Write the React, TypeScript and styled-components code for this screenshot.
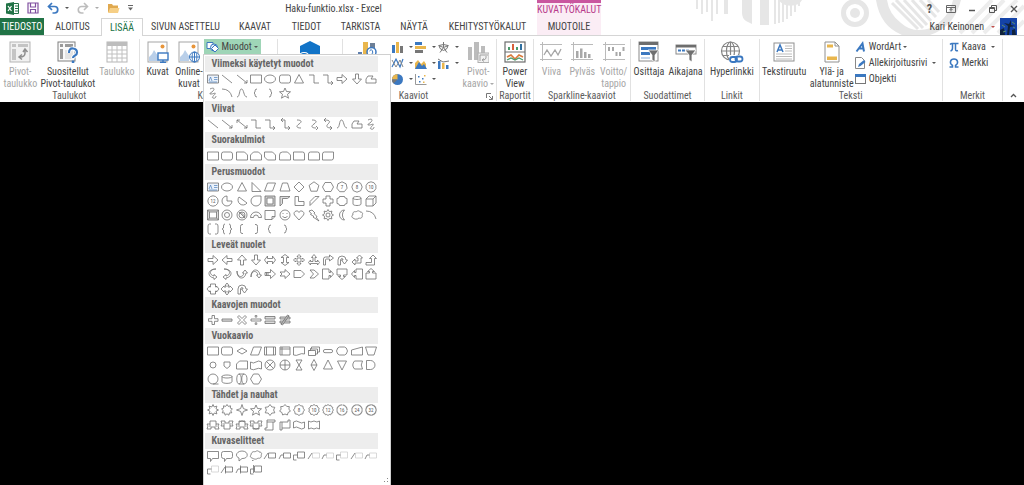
import React from 'react';
import styled, { createGlobalStyle, css } from 'styled-components';

const font = '"Roboto Condensed", Roboto, "Open Sans", sans-serif';
const green = '#217346';
const blue = '#3b78c0';
const amber = '#e9b64d';

const GlobalStyle = createGlobalStyle`
  * { box-sizing: border-box; }
  body { margin: 0; background: #000; font-family: ${font}; font-size: 10px; line-height: 12px; color: #444; }
  button { font: inherit; color: inherit; background: none; border: 0; padding: 0; margin: 0; }
  h1, h2, h3 { font-size: inherit; font-weight: inherit; margin: 0; }
  svg { display: block; flex: none; }
`;

/* ---------- window frame ---------- */
const Window = styled.div`
  min-height: 100vh;
  background: #000;
`;
const Top = styled.header`
  position: relative;
  background: #fff;
  border-bottom: 1px solid #d5d5d5;
`;
const Decoration = styled.svg`
  position: absolute;
  right: 0;
  top: 0;
`;
const TitleRow = styled.div`
  position: relative;
  display: flex;
  height: 18px;
`;
const QuickAccess = styled.div`
  width: 130px;
  display: flex;
  align-items: center;
  padding: 0 0 2px 6px;
  gap: 8px;
`;
const QuickButton = styled.button`
  display: flex;
  align-items: center;
  gap: 4px;
`;
const Title = styled.h1`
  width: 407px;
  text-align: center;
  line-height: 18px;
`;
const ContextHeading = styled.div`
  width: 64px;
  border-top: 3px solid #c9579f;
  background: #fbedf5;
  color: #b83b8b;
  text-align: center;
  line-height: 14px;
  white-space: nowrap;
`;
const WindowControls = styled.div`
  flex: 1;
  display: flex;
  justify-content: flex-end;
`;
const ControlButton = styled.button`
  width: 21px;
  display: flex;
  align-items: center;
  justify-content: center;
  font-size: 12px;
  font-weight: 700;
  color: #555;
`;

/* ---------- tabs ---------- */
const TabRow = styled.nav`
  position: relative;
  display: flex;
  height: 17px;
`;
const Tab = styled.button<{ $w: number; $kind?: 'file' | 'active' | 'context' }>`
  width: ${p => p.$w}px;
  height: 17px;
  white-space: nowrap;
  line-height: 17px;
  ${p => p.$kind === 'file' && css`background: ${green}; color: #fff;`}
  ${p => p.$kind === 'active' && css`
    height: 18px;
    background: #fff;
    color: ${green};
    border: 1px solid #d5d5d5;
    border-bottom: 0;
    line-height: 16px;
  `}
  ${p => p.$kind === 'context' && css`background: #fbedf5;`}
`;
const Account = styled.button`
  margin-left: auto;
  padding-right: 7px;
  display: flex;
  align-items: center;
  gap: 5px;
`;

/* ---------- ribbon ---------- */
const Ribbon = styled.main`
  display: flex;
  height: 66px;
  padding: 3px 0 0;
  background: #fff;
`;
const Group = styled.section<{ $w: number }>`
  flex: ${p => p.$w} 1 0;
  min-width: 0;
  height: 62px;
  display: flex;
  flex-direction: column;
  border-right: 1px solid #e1e1e1;
`;
const GroupBody = styled.div<{ $pad?: number }>`
  flex: 1;
  display: flex;
  padding-left: ${p => p.$pad ?? 0}px;
`;
const GroupLabel = styled.h2<{ $launcher?: boolean }>`
  position: relative;
  text-align: center;
  white-space: nowrap;
  line-height: 10px;
  color: #5c5c5c;
  padding-right: ${p => (p.$launcher ? 12 : 0)}px;
`;
const Launcher = styled.button`
  position: absolute;
  right: 3px;
  top: 2px;
`;
const BigButton = styled.button<{ $w: number }>`
  flex: ${p => p.$w} 1 0;
  min-width: 0;
  display: flex;
  flex-direction: column;
  align-items: center;
  justify-content: flex-start;
  gap: 3px;
  padding-top: 2px;
  white-space: nowrap;
  &:disabled { color: #a6a6a6; }
`;
const Caret = styled.span<{ $color?: string }>`
  display: inline-block;
  vertical-align: middle;
  margin-left: 2px;
  border: 2px solid transparent;
  border-top-color: ${p => p.$color ?? '#555'};
  border-bottom: 0;
`;
const Column = styled.div<{ $w: number }>`
  flex: ${p => p.$w} 1 0;
  min-width: 0;
  display: flex;
  flex-direction: column;
`;
const SmallButton = styled.button`
  height: 16px;
  display: flex;
  align-items: center;
  gap: 3px;
  white-space: nowrap;
`;
const ChartGrid = styled.div`
  flex: 70 1 0;
  display: grid;
  grid-template-columns: repeat(3, 1fr);
  align-content: start;
`;
const Collapse = styled.div`
  flex: 21 1 0;
  display: flex;
  align-items: flex-end;
  justify-content: center;
  padding-bottom: 4px;
`;

/* ---------- shapes menu ---------- */
const MenuAnchor = styled.div`
  position: relative;
  flex: 73 1 0;
`;
const ShapesButton = styled.button`
  width: 57px;
  height: 16px;
  display: flex;
  align-items: center;
  gap: 2px;
  padding-left: 2px;
  background: #9fd5b7;
`;
const Menu = styled.div`
  position: absolute;
  z-index: 5;
  left: -1px;
  top: 15px;
  width: 188px;
  min-height: calc(100vh - 54px);
  display: flex;
  flex-direction: column;
  padding: 1px 12px 0 1px;
  background: #fff;
  border: 1px solid #d0d0d0;
  border-bottom: 0;
`;
const MenuSection = styled.section<{ $rows: number }>`
  flex: ${p => p.$rows} 0 auto;
  display: flex;
  flex-direction: column;
`;
const MenuHeading = styled.h3`
  height: 16px;
  padding-left: 6px;
  background: #ededed;
  color: #666;
  font-weight: 700;
  line-height: 16px;
`;
const ShapeGrid = styled.div`
  flex: 1;
  display: grid;
  grid-template-columns: repeat(12, 1fr);
  grid-auto-rows: 14px;
  align-content: space-evenly;
  padding-bottom: 1px;
`;
const ShapeButton = styled.button`
  display: flex;
  justify-content: center;
`;
const Grip = styled.div`
  height: 7px;
  display: flex;
  justify-content: flex-end;
  margin-right: -11px;
`;

/* ---------- shape drawings, each on a 14 x 14 field ---------- */
const rect = 'M1.5 3h11v8h-11z';
const line = 'M2 3l10 8';
const arrowEnd = 'M12 8v3h-3';
const elbow = 'M2 3h5v8h5';
const sCurve = 'M5 3c5 0 5 2 2 4s-3 4 2 4';
const curve = 'M2 11c3 0 2-8 4.500-8s2 8 5.500 8';
const freeform = 'M4 4h5l-2 3h5v4h-10v-4z';
const scribble = 'M4 3c4-2 5 0 3 2s-5 3-2 3 5-2 4 0-4 3-2 4 3-1 3-2';
const ellipse = 'M1.500 7a5.500 4 0 1 0 11 0a5.500 4 0 1 0-11 0z';
const round = 'M3.500 3h7q2 0 2 2v4q0 2-2 2h-7q-2 0-2-2v-4q0-2 2-2z';
const triangle = 'M7 2.500l4.500 8.500h-9z';
const circle = 'M2 7a5 5 0 1 0 10 0a5 5 0 1 0-10 0z';
const arrowR = 'M2 5.500h5v-3l5 4.500-5 4.500v-3h-5z';
const arrowL = 'M12 5.500h-5v-3l-5 4.500 5 4.500v-3h5z';
const arrowU = 'M5.500 12v-5h-3l4.500-5 4.500 5h-3v5z';
const arrowD = 'M5.500 2v5h-3l4.500 5 4.500-5h-3v-5z';
const braceL = 'M8 3q-2 0-2 2v1l-1 1 1 1v1q0 2 2 2';
const braceR = 'M6 3q2 0 2 2v1l1 1-1 1v1q0 2-2 2';
const star5 = 'M7 2l1.500 3.500 4 .3-3 2.500 1 3.900-3.500-2.200-3.500 2.200 1-3.900-3-2.500 4-.3z';
const plus = 'M5 2h4v3h3v4h-3v3h-4v-3h-3v-4h3z';
const plusThin = 'M6 2.500h2.500v3.200h3.500v2.600h-3.500v3.200h-2.500v-3.200h-3.500v-2.600h3.500z';
const uTurn = 'M3 12v-5q0-4 4-4t4 4h1.500l-3 4-3-4h1.500q0-1.500-1-1.500t-1.500 1.500v5z';
const burst = (n: number, inner: number, outer = 5.5) =>
  'M' +
  Array.from({ length: n * 2 }, (_, i) => {
    const a = (Math.PI * i) / n - Math.PI / 2;
    const r = i % 2 ? inner : outer;
    return `${(7 + r * Math.cos(a)).toFixed(1)} ${(7 + r * Math.sin(a)).toFixed(1)}`;
  }).join('L') +
  'z';
const polygon = (n: number, r = 5.2) =>
  'M' +
  Array.from({ length: n }, (_, i) => {
    const a = (Math.PI * 2 * i) / n - Math.PI / 2;
    return `${(7 + r * Math.cos(a)).toFixed(1)} ${(7 + r * Math.sin(a)).toFixed(1)}`;
  }).join('L') +
  'z';
const hexagon = 'M4 2.500h6l2.500 4.500-2.500 4.500h-6l-2.500-4.500z';
const ribbonUp = 'M1 6h3v-3h6v3h3l-1 2 1 3h-4v-2h-4v2h-4l1-3zM4 6v3M10 6v3';
const ribbonDown = 'M1 3h4v2h4v-2h4l-1 3 1 2h-3v3h-6v-3h-3l1-2zM4 5v3M10 5v3';

type Shape = string | { d: string; n?: string; fill?: string; faint?: boolean; textBox?: boolean };
const textBox: Shape = { d: 'M1.500 3h11v8h-11z', textBox: true };
const numbered = (d: string, n: string): Shape => ({ d, n });

const sections: { title: string; shapes: Shape[] }[] = [
  {
    title: 'Viimeksi käytetyt muodot',
    shapes: [textBox, line, line + arrowEnd, rect, ellipse, round, triangle, elbow, elbow + 'M10 9l2 2-2 2', arrowR, arrowD, freeform,
      scribble, 'M2 3q8 0 10 8', curve, braceL, braceR, star5],
  },
  {
    title: 'Viivat',
    shapes: [line, line + arrowEnd, line + arrowEnd + 'M2 6v-3h3', elbow, elbow + 'M10 9l2 2-2 2', 'M3 3h4v8h5M10 9l2 2-2 2M5 1l-2 2 2 2',
      sCurve, sCurve + 'M9 9l2 2-2 2', 'M3 3c7 0 6 2 4 4s-2 4 4 4M9 9l2 2-2 2M5 1l-2 2 2 2', curve, freeform, scribble],
  },
  {
    title: 'Suorakulmiot',
    shapes: [rect, round, 'M1.500 3h8l3 3v5h-11z', 'M4.500 3h5l3 3v5h-11v-5z', 'M1.500 3h8l3 3v5h-8l-3-3z', 'M4.500 3h5l3 3v5h-11v-5q0-3 3-3z',
      'M1.500 3h9q2 0 2 2v6h-11z', 'M3.500 3h7q2 0 2 2v6h-11v-6q0-2 2-2z', 'M3.500 3h9v6q0 2-2 2h-9v-6q0-2 2-2z'],
  },
  {
    title: 'Perusmuodot',
    shapes: [textBox, ellipse, triangle, 'M3 2.500v9h9z', 'M4.500 3h8l-3 8h-8z', 'M4.500 3h5l2.500 8h-10z', 'M7 2l5 5-5 5-5-5z', polygon(5), hexagon,
      numbered(polygon(7), '7'), numbered(polygon(8), '8'), numbered(polygon(10), '10'),
      numbered(polygon(12), '12'), 'M7 2a5 5 0 1 0 5 5h-5z', 'M4 3a5 5 0 1 0 8 6z', 'M7 2h5v5a5 5 0 1 1-5-5z',
      { d: 'M2 2h10v10h-10zM4 4h6v6h-6z', fill: '#cfcfcf' }, { d: 'M2 2.500h10l-2.500 2h-5v5l-2.500 2.500z', fill: '#ddd' }, 'M3 2.500h3.500v5h5.500v4h-9z', 'M8 2.500h4l-9 9v-4z',
      plus, 'M4.500 2.500h5q0 2 2.500 2v5q-2.500 0-2.500 2h-5q0-2-2.500-2v-5q2.500 0 2.500-2z', 'M3 4v6c0 2 8 2 8 0v-6c0-2-8-2-8 0c0 2 8 2 8 0', 'M2 5l3-3h7v7l-3 3h-7zM2 5h7v7M9 5l3-3',
      { d: 'M1.500 2h11v10h-11zM3.500 4h7v6h-7zM1.500 2l2 2M12.500 2l-2 2M1.500 12l2-2M12.500 12l-2-2', fill: '#ddd' }, circle + 'M4.500 7a2.500 2.500 0 1 0 5 0a2.500 2.500 0 1 0-5 0z',
      circle + 'M4 7a3 3 0 1 0 6 0a3 3 0 1 0-6 0zM4 4l6 6M5.500 4l4.500 4.500', 'M1.500 9.500a5.500 5.500 0 0 1 11 0h-3a2.500 2.500 0 0 0-5 0z', 'M2 2.500h10v6l-3 3h-7zM12 8.500h-3v3',
      circle + 'M4.500 8.500q2.500 2.500 5 0M5 5v1M9 5v1', 'M7 12l-4.500-5c-2-3 3-6 4.500-2.500c1.500-3.500 6.500-.5 4.500 2.500z', 'M2 3l3-1 3 3-1 .5 3 3-1 .5 3 4-6-4 1-.5-3.500-2 1-.5z',
      burst(8, 3.6) + 'M5 7a2 2 0 1 0 4 0a2 2 0 1 0-4 0', 'M9.500 2a5 5 0 1 0 0 10a7 7 0 0 1 0-10z', 'M3 10c-2-1-1-3 0-3c-1-3 2-4 3-3c2-2 4-1 4 0c3 0 3 2 2 3c1 2-1 4-3 3c-2 2-5 1-6 0z', 'M2 3q8 0 10 8',
      'M5 2h-1.500q-1.500 0-1.500 2v6q0 2 1.500 2h1.500M9 2h1.500q1.500 0 1.500 2v6q0 2-1.500 2h-1.500', 'M5 2q-1.500 0-1.500 2v2l-1.500 1 1.500 1v2q0 2 1.500 2M9 2q1.500 0 1.500 2v2l1.500 1-1.500 1v2q0 2-1.500 2',
      'M8 2.500h-1q-1.500 0-1.500 2v5q0 2 1.500 2h1', 'M6 2.500h1q1.500 0 1.500 2v5q0 2-1.500 2h-1', braceL, braceR],
  },
  {
    title: 'Leveät nuolet',
    shapes: [arrowR, arrowL, arrowU, arrowD, 'M1.500 7l3-4v2.500h5v-2.500l3 4-3 4v-2.500h-5v2.500z', 'M7 1.500l4 3h-2.500v5h2.500l-4 3-4-3h2.500v-5h-2.500z',
      'M7 1.500l2 2h-1v2.500h2.500v-1l2 2-2 2v-1h-2.500v2.500h1l-2 2-2-2h1v-2.500h-2.500v1l-2-2 2-2v1h2.500v-2.500h-1z', 'M7 1.500l2.500 3h-1.500v4h2.500v-1.500l2 2.500-2 2.500v-1.500h-7v1.500l-2-2.500 2-2.500v1.500h2.500v-4h-1.500z',
      'M2.500 12v-6q0-2 2-2h4v-2l4 3-4 3v-2h-3q-1 0-1 1v5z', uTurn, 'M2 9l3-3v2h3v-3h-1.500l3-3 3 3h-1.500v5h-6v2z', 'M2 9.500h5.500v-4h-2l3.500-3.500 3.500 3.500h-2v6.500h-8.500z',
      'M10 2c-7 0-7 6-2 7v-1.500l3 2.500-3 2.500v-1.500c-7-1-7-9 2-9z', 'M4 2c7 0 7 6 2 7v-1.500l-3 2.500 3 2.500v-1.500c7-1 7-9-2-9z', 'M2 4c0 7 6 7 7 2h-1.500l2.500-3 2.500 3h-1.500c-1 7-9 7-9-2z', 'M2 10c0-7 6-7 7-2h-1.500l2.500 3 2.500-3h-1.500c-1-7-9-7-9 2z',
      'M2 5.500v3M3.500 5.500v3M5 5.500h2.500v-3l5 4.500-5 4.500v-3h-2.500zM2 5.500h3M2 8.500h3', 'M2 5h5v-2.500l5 4.500-5 4.500v-2.500h-5l2-2z', 'M2 3.500h7l3.500 3.500-3.500 3.500h-7z', 'M3 3h4l4.500 4-4.500 4h-4l3.500-4z',
      'M1.500 2h6.500v3.500h1.500v-2l3 3.500-3 3.500v-2h-1.500v3.500h-6.500z', 'M2 2h10v6h-3.500v1.500h2l-3.500 3-3.500-3h2v-1.500h-3.500z', 'M12.500 2h-6.500v3.500h-1.500v-2l-3 3.500 3 3.500v-2h1.500v3.500h6.500z', 'M2 12h10v-6h-3.500v-1.500h2l-3.500-3-3.500 3h2v1.500h-3.500z',
      'M4.500 2h5v3h1v-1l2.500 3-2.500 3v-1h-1v3h-5v-3h-1v1l-2.500-3 2.500-3v1h1z', 'M7 1l2 2.500h-1v1.500h2v-1l3 3-3 3v-1h-2v1.500h1l-2 2.500-2-2.500h1v-1.500h-2v1l-3-3 3-3v1h2v-1.500h-1z', uTurn],
  },
  {
    title: 'Kaavojen muodot',
    shapes: [plusThin, { d: 'M2 6h10v2.200h-10z', fill: '#ddd' }, 'M4 2.500l3 3 3-3 1.500 1.500-3 3 3 3-1.500 1.500-3-3-3 3-1.500-1.500 3-3-3-3z', 'M2 6h10v2h-10zM6.200 2.500h1.600v1.600h-1.600zM6.200 9.800h1.600v1.600h-1.600z',
      { d: 'M2 3.500h10v2.500h-10zM2 8h10v2.500h-10z', fill: '#ddd' }, { d: 'M2 4h10v2h-10zM2 8h10v2h-10zM9.500 2l1.500 .8-6.500 9.200-1.500-.8z', fill: '#ddd' }],
  },
  {
    title: 'Vuokaavio',
    shapes: [rect, round, 'M7 4l5 3-5 3-5-3z', 'M4.500 3h8l-3 8h-8z', 'M1.500 3h11v8h-11zM3.500 3v8M10.500 3v8', 'M2 3h10v8h-10zM4 3v8M2 5h10', 'M1.500 3h11v7q-3-1-5.500 .5t-5.500 .5z', 'M4.500 3h8v5h-2v2h-2v1.500h-7v-5h2v-2h1zM1.500 6.500h7v4M3.500 5h7v4',
      'M4 5.500h6a1.500 1.500 0 0 1 0 3.200h-6a1.500 1.500 0 0 1 0-3.200z', 'M1.500 7q1-4 3-4h5q2 0 3 4q-1 4-3 4h-5q-2 0-3-4z', 'M1.500 6l11-3v8h-11z', 'M1.500 3h11l-2.500 8h-6z',
      'M4 7a3 3 0 1 0 6 0a3 3 0 1 0-6 0z', 'M4 4h6v4l-3 2.500-3-2.500z', 'M4.500 3h8v8h-11v-5z', 'M1.500 4q3 2 5.500 0t5.500 0v7q-3-1.500-5.500 0t-5.500 0z', circle + 'M3.500 3.500l7 7M10.500 3.500l-7 7', circle + 'M7 2v10M2 7h10', 'M4 2h6l-6 10h6z',
      'M7 1.500l3 5.500-3 5.500-3-5.500zM4 7h6', 'M7 2l4.500 9h-9z', 'M7 12l4.500-9h-9z', 'M4.500 3h8q-2.500 4 0 8h-8q-3.500-4 0-8z', 'M2.500 2.500h4a4.500 4.500 0 0 1 0 9h-4z',
      circle + 'M7 12h5.500', 'M2 4.500v5c0 2.500 10 2.500 10 0v-5c0-2-10-2-10 0c0 2 10 2 10 0', 'M4 2h5c4 0 4 10 0 10h-5c-3 0-3-10 0-10zM4 2c3 0 3 10 0 10M9 2c-3 0-3 10 0 10', 'M4.500 2h5l3 5-3 5h-5l-3-5z'],
  },
  {
    title: 'Tähdet ja nauhat',
    shapes: [burst(8, 3.2), burst(9, 3.8), burst(4, 2), star5, burst(6, 3.6), burst(7, 4), numbered(burst(8, 4.6), '8'), numbered(burst(10, 4.6), '10'), numbered(burst(12, 4.7), '12'), numbered(burst(16, 4.7), '16'), numbered(burst(24, 4.8), '24'), numbered(burst(32, 4.8), '32'),
      ribbonUp, ribbonDown, ribbonUp + 'M4 4q3-2 6 0', ribbonDown + 'M4 10q3 2 6 0', 'M4 2h8v2h-2v8h-8v-2h2zM4 4h6', 'M2 4h8v-2h2v8h-8v2h-2zM4 4v6', 'M1.500 4q3-2 5.500 0t5.500 0v6q-3 2-5.500 0t-5.500 0z', 'M1.500 3q2 2 5.500 0q3 2 5.500 0v8q-3-2-5.500 0q-3-2-5.500 0z'],
  },
  {
    title: 'Kuvaselitteet',
    shapes: ['M1.500 2.500h11v7h-6l-2 3v-3h-3z', 'M3.500 2.500h7q2 0 2 2v3q0 2-2 2h-4l-2 3v-3h-1q-2 0-2-2v-3q0-2 2-2z', 'M4 12l0-3c-5-2-2-7 3-7c7 0 7 8 0 7.500z', 'M3 9c-3-1-1-3-1-3c0-3 3-4 4-3c2-2 4-1 4 0c3 0 3 2 2 3c1 2-1 4-3 3c-2 2-4 1-6 0zM3 11.500h1.500',
      'M5.500 4h7v5h-7zM1 10l4-6', 'M5.500 4h7v5h-7zM1 10l2-4h2.500', 'M5.500 3h7v6h-7zM5.500 6h-4v5h3',
      { d: 'M5.500 4h7v5h-7zM1 10l4-6', faint: true }, { d: 'M5.500 4h7v5h-7zM1 10l2-4h2.500', faint: true }, { d: 'M5.500 3h7v6h-7zM5.500 6h-4v5h3', faint: true }, { d: 'M5.500 4h7v5h-7zM1 10l4-6', faint: true }, { d: 'M5.500 4h7v5h-7zM1 10l2-4h2.500', faint: true },
      { d: 'M5.500 3h7v6h-7zM5.500 6h-4v5h3', faint: true }, 'M5.500 4h7v5h-7zM1 10l4-6M5.500 2.500v8', 'M5.500 4h7v5h-7zM1 10l2-4h2.500M5.500 2.500v8', 'M5.500 3h7v6h-7zM5.500 6h-4v5h3M4.500 2v8'],
  },
];

const ShapeIcon = ({ shape }: { shape: Shape }) => {
  const s = typeof shape === 'string' ? { d: shape } : shape;
  const cut = s.faint ? s.d.lastIndexOf('M') : 0;
  return (
    <svg width="14" height="14" viewBox="0 0 14 14" fill={s.fill ?? 'none'} fillRule="evenodd" stroke="#707070" strokeWidth="0.8" aria-hidden="true">
      {s.faint && <path d={s.d.slice(0, cut)} stroke="#cfcfcf" />}
      <path d={s.d.slice(cut)} fill={s.textBox ? '#eaf1fa' : undefined} />
      {s.textBox && <path d="M3 9l1.500-4 1.500 4M8 5.500h3.500M8 7.500h3.500M3 10h8" stroke="#4a7ebb" strokeWidth="0.7" fill="none" />}
      {s.n && (
        <text x="7" y="9" textAnchor="middle" fontSize="5" stroke="none" fill="#555">{s.n}</text>
      )}
    </svg>
  );
};

/* ---------- ribbon icons ---------- */
const Icon = ({ w = 22, h = 22, children }: { w?: number; h?: number; children: React.ReactNode }) => (
  <svg width={w} height={h} viewBox={`0 0 ${w} ${h}`} fill="none" aria-hidden="true">{children}</svg>
);
const PivotIcon = () => (
  <Icon>
    <rect x="1" y="1" width="20" height="20" fill="#f1f1f1" stroke="#b5b5b5" />
    <path d="M3 3h4v3h-4zM9 3h10v3h-10zM3 8h4v11h-4z" fill="#c4c4c4" />
    <path d="M16 9v3q0 4-5 4M14 11l2-3 2.500 3M13 13.500l-3 2.500 3 2.500" stroke="#8f8f8f" strokeWidth="1.500" />
  </Icon>
);
const SuggestedPivotIcon = () => (
  <Icon>
    <rect x="1" y="1" width="17" height="19" fill="#fafafa" stroke="#808080" />
    <path d="M3 3h3v3h-3zM8 3h8v3h-8zM3 8h3v10h-3z" fill="#9a9a9a" />
    <path d="M8 9h8v9h-8z" fill="#e4e4e4" />
    <path d="M12 12q0-5 4-4.500t4 4q0 2-2 3t-2 3" stroke="#fff" strokeWidth="4" />
    <path d="M12 12q0-5 4-4.500t4 4q0 2-2 3t-2 2.500" stroke={blue} strokeWidth="2.200" />
    <path d="M14.800 19.500h2.500v2.500h-2.500z" fill={blue} />
  </Icon>
);
const TableIcon = () => (
  <Icon>
    <rect x="1" y="1" width="20" height="20" fill="#fff" stroke="#b5b5b5" />
    <path d="M1 1h20v4h-20z" fill="#bdbdbd" />
    <path d="M1 9h20M1 13h20M1 17h20M6 5v16M11 5v16M16 5v16" stroke="#c0c0c0" />
  </Icon>
);
const PictureIcon = ({ online }: { online?: boolean }) => (
  <Icon>
    <rect x="1" y="1" width="19" height="20" fill="#fff" stroke="#a5a5a5" />
    <circle cx="15.500" cy="5.500" r="2" fill="#e8953a" />
    <path d="M2 20v-4l3-3 2-4 4 6v5z" fill="#b9cfe9" />
    {online ? (
      <g stroke={blue} strokeWidth="1"><circle cx="16.500" cy="16" r="5" fill="#fff" /><path d="M11.500 16h10M16.500 11v10" /><ellipse cx="16.500" cy="16" rx="2.400" ry="5" /></g>
    ) : (
      <g stroke={blue} strokeWidth="1.400"><rect x="11" y="12" width="10" height="7" fill="#fff" /><path d="M13 21.300h6M16 19v2" /></g>
    )}
  </Icon>
);
const AppsIcon = () => (
  <Icon>
    <path d="M11 0l10 5v11l-10 5-10-5v-11z" fill="#1173c7" />
    <path d="M0 19v-3a5 5 0 0 1 5-4.500c3 0 5 2 5 5z" fill="#1173c7" stroke="#fff" strokeWidth="1.200" />
  </Icon>
);
const SuggestedChartsIcon = () => (
  <Icon>
    <path d="M2 11h4v10h-4z" fill="#5f7fae" /><path d="M7 1h5v20h-5z" fill={amber} /><path d="M14 2h5v19h-5z" fill="#6d7f96" />
    <circle cx="15.500" cy="11" r="4.500" fill="#fff" stroke={blue} strokeWidth="1.500" /><path d="M13.500 10q2-3 3 0t-1 3" stroke={blue} />
  </Icon>
);
const PivotChartIcon = () => (
  <Icon>
    <path d="M1 6h4v13h-4zM7 1h5v18h-5zM14 5h4v8h-4z" fill="#bcbcbc" />
    <rect x="11" y="12" width="11" height="9.500" fill="#f2f2f2" stroke="#b0b0b0" />
    <path d="M13 14h8M13 14v6M19 15v2q0 2-4 2M17 17.500l-2 1.500 2 1.500" stroke="#a0a0a0" />
  </Icon>
);
const PowerViewIcon = () => (
  <Icon>
    <rect x="1" y="1" width="20" height="20" fill="#fff" stroke="#6d6d6d" strokeWidth="1.200" />
    <path d="M1 11h20" stroke="#6d6d6d" />
    <path d="M4 6h2v3h-2zM12 6h2v3h-2z" fill="#4a9b6c" /><path d="M8 3h2v6h-2z" fill="#d9603b" /><path d="M16 3h2v6h-2z" fill="#2f6f9f" />
    <path d="M3 16l4-2 4 4 4-4 4 2" stroke="#d9793b" strokeWidth="1.600" /><path d="M3 19l4-2 4 2 4-2 4 2" stroke="#4a9b6c" strokeWidth="1.200" />
  </Icon>
);
const SparkIcon = ({ kind }: { kind: 'line' | 'column' | 'winloss' }) => (
  <Icon>
    <path d="M2.500 1v19M0 3.500h22M0 18.500h22" stroke="#bababa" />
    {kind === 'line' && <path d="M4 14l3-5 4 6 4-6 3 5 3-6" stroke="#a5a5a5" strokeWidth="1.300" />}
    {kind === 'column' && <path d="M5 10h2.500v7h-2.500zM9 7.500h2.500v9.500h-2.500zM13 11h2.500v6h-2.500zM17 13h2.500v4h-2.500z" fill="#a8a8a8" />}
    {kind === 'winloss' && <path d="M5 6h2v4h-2zM9 6h2v4h-2zM12.500 11h2v4h-2zM16 11h2v4h-2zM19.500 6h2v4h-2z" fill="#a8a8a8" />}
  </Icon>
);
const funnel = 'M10 9h11l-4 5v7l-3-2v-5z';
const SlicerIcon = () => (
  <Icon>
    <rect x="1" y="1" width="19" height="19" fill="#fff" stroke="#8a8a8a" />
    <path d="M1 1h19v3h-19z" fill="#6d6d6d" />
    <path d="M3 6h15v3h-15zM3 11h9v3h-9z" fill={blue} /><path d="M3 16h9v2h-9z" fill="#c4d6ec" />
    <path d={funnel} fill="#6f6f6f" stroke="#fff" strokeWidth="0.800" />
  </Icon>
);
const TimelineIcon = () => (
  <Icon>
    <rect x="1" y="4" width="20" height="9" fill="#fff" stroke="#8a8a8a" />
    <path d="M1 4h20v2.500h-20z" fill="#6d6d6d" />
    <path d="M3 9.500h3M7 9.500h3M11 9.500h3" stroke={blue} strokeWidth="2" />
    <path d={funnel} fill="#6f6f6f" stroke="#fff" strokeWidth="0.800" />
  </Icon>
);
const LinkIcon = () => (
  <Icon w={24}>
    <g stroke="#858585" strokeWidth="1.200">
      <circle cx="10.500" cy="10" r="9" /><ellipse cx="10.500" cy="10" rx="4" ry="9" /><path d="M10.500 1v18M1.500 10h18M3 5.500h15M3 14.500h15" />
    </g>
    <path d="M9 14h15v8h-15z" fill="#fff" />
    <g stroke={blue} strokeWidth="1.800"><rect x="10" y="16" width="7" height="5" rx="2.500" /><rect x="15.500" y="15.500" width="7" height="5" rx="2.500" /></g>
  </Icon>
);
const TextBoxIcon = () => (
  <Icon>
    <rect x="1" y="2" width="20" height="18" fill="#fff" stroke="#909090" />
    <path d="M4 11l3-7 3 7M5 9h4" stroke={blue} strokeWidth="1.500" />
    <path d="M12 5h7M12 7.500h7M12 10h7M3 13h16M3 15.500h16M3 18h16" stroke="#bcbcbc" />
  </Icon>
);
const HeaderFooterIcon = () => (
  <Icon>
    <path d="M4 1h10l4 4v16h-14z" fill="#fff" stroke="#909090" /><path d="M14 1v4h4" stroke="#909090" />
    <path d="M6 3.500h6v3h-6zM6 15.500h10v3.500h-10z" fill={amber} />
  </Icon>
);
const Pie = () => (<Icon w={13} h={13}><circle cx="6.500" cy="6.500" r="5.500" fill={blue} /><path d="M6.500 6.500v-5.500a5.500 5.500 0 0 0-5.500 5.500z" fill={amber} /><path d="M6.500 6.500l-4 4a5.500 5.500 0 0 1-1.500-4z" fill="#777" /></Icon>);
const chartIcons: [string, React.ReactNode][] = [
  ['Pylväskaavio', <Icon w={13} h={13}><path d="M1 4h3v8h-3z" fill={blue} /><path d="M5 1h3v11h-3z" fill={amber} /><path d="M9 5h3v7h-3z" fill="#777" /></Icon>],
  ['Palkkikaavio', <Icon w={13} h={13}><path d="M1 1h7v3h-7z" fill={blue} /><path d="M1 5h11v3h-11z" fill={amber} /><path d="M1 9h8v3h-8z" fill="#777" /></Icon>],
  ['Säteittäinen', <Icon w={13} h={13}><path d="M6.500 1v5.500l5-2M6.500 6.500l3.500 5M6.500 6.500l-3.500 5M6.500 6.500l-5-2M2 4.500l4.500-1 4.500 1-1 3-3.500 2-3.500-2z" stroke="#777" /></Icon>],
  ['Viivakaavio', <Icon w={13} h={13}><path d="M1 10l4-8 4 8 3-8" stroke={blue} strokeWidth="1.200" /><path d="M1 3l4 7 4-7 3 7" stroke="#888" /></Icon>],
  ['Aluekaavio', <Icon w={13} h={13}><path d="M1 12v-6l3-3 3 4 3-3 2 3v5z" fill={amber} /><path d="M1 12l4-7 3 4 2-2 3 5z" fill={blue} /></Icon>],
  ['Yhdistelmä', <Icon w={13} h={13}><path d="M1 4h2.500v8h-2.500zM9 8h2.500v4h-2.500z" fill={blue} /><path d="M5 6h2.500v6h-2.500z" fill={amber} /><path d="M1 2l5 3 6-1" stroke="#777" /></Icon>],
  ['Ympyräkaavio', <Pie />],
  ['Pistekaavio', <Icon w={13} h={13}><path d="M1.500 1v10.500h11" stroke="#999" /><path d="M4 3h1.500v1.500h-1.500zM8 5h1.500v1.500h-1.500zM5 8h1.500v1.500h-1.500z" fill={blue} /><path d="M10 2h1.500v1.500h-1.500zM9 8.500h1.500v1.500h-1.500z" fill={amber} /></Icon>],
];

const HeaderDecoration = () => (
  <Decoration width="344" height="35" viewBox="0 0 344 35" fill="none" aria-hidden="true">
    <path d="M17 0v9M22 0v14M27 0v12M32 0v21M37 0v14" stroke="#e6e6e6" strokeWidth="2" />
    <path d="M46 0v14" stroke="#e6e6e6" strokeWidth="4" />
    <path d="M62 0h10v24l-6-3q-4-3-4-8zM80 0h9v25h-9z" fill="#e6e6e6" />
    <path d="M95 0v24M99 0v23M103 0v22M107 0v19M111 0v16M115 0v12M119 0v6" stroke="#e6e6e6" strokeWidth="2" />
    <path d="M99 0a12 8 0 0 0 23 0z" fill="#e6e6e6" />
    <circle cx="175" cy="13" r="11.500" stroke="#e6e6e6" strokeWidth="5" />
    <circle cx="175" cy="13" r="5" fill="#e6e6e6" />
    <path d="M196 0q4 26 26 35h28q24-8 31-35h-8q-4 18-22 28q-18 6-30-5q-12-9-14-23z" fill="#e6e6e6" />
    <path d="M212 3l26 26M216 0l27 28M224 0l23 25M232 0l19 21M240 0l16 17M248 0l11 12" stroke="#e6e6e6" strokeWidth="3" />
    <path d="M280 33l32-33M292 33l32-33M304 33l33-33M318 33l26-27M332 33l12-12" stroke="#ededed" strokeWidth="4" />
  </Decoration>
);

const tabs: { label: string; w: number; kind?: 'file' | 'active' | 'context' }[] = [
  { label: 'TIEDOSTO', w: 44, kind: 'file' },
  { label: 'ALOITUS', w: 57 },
  { label: 'LISÄÄ', w: 42, kind: 'active' },
  { label: 'SIVUN ASETTELU', w: 85 },
  { label: 'KAAVAT', w: 54 },
  { label: 'TIEDOT', w: 49 },
  { label: 'TARKISTA', w: 59 },
  { label: 'NÄYTÄ', w: 48 },
  { label: 'KEHITYSTYÖKALUT', w: 99 },
  { label: 'MUOTOILE', w: 64, kind: 'context' },
];

const ShapesMenu = () => (
  <Menu>
    {sections.map(({ title, shapes }) => (
      <MenuSection key={title} $rows={Math.ceil(shapes.length / 12)}>
        <MenuHeading>{title}</MenuHeading>
        <ShapeGrid>
          {shapes.map((shape, i) => (
            <ShapeButton key={i} aria-label={`${title} ${i + 1}`}><ShapeIcon shape={shape} /></ShapeButton>
          ))}
        </ShapeGrid>
      </MenuSection>
    ))}
    <Grip>
      <Icon w={6} h={6}><path d="M4 0h1v1h-1zM4 3h1v1h-1zM1 3h1v1h-1z" fill="#888" /></Icon>
    </Grip>
  </Menu>
);

export default function App() {
  return (
    <Window>
      <GlobalStyle />
      <Top>
        <HeaderDecoration />
        <TitleRow>
          <QuickAccess>
            <QuickButton aria-label="Excel">
              <Icon w={13} h={13}><path d="M7 1.500h5.500v10h-5.500" fill="#fff" stroke={green} /><path d="M9 4h3M9 6.500h3M9 9h3" stroke={green} /><path d="M0 1.500l8-1.500v13l-8-1.500z" fill={green} /><path d="M2 4l3.500 5M5.500 4l-3.500 5" stroke="#fff" strokeWidth="1.200" /></Icon>
            </QuickButton>
            <QuickButton aria-label="Tallenna">
              <Icon w={12} h={12}><path d="M1 1h10v10h-10zM3.500 1v4h5v-4M3.500 11v-3.500h5v3.500" stroke="#8050a0" strokeWidth="1.200" /></Icon>
            </QuickButton>
            <QuickButton aria-label="Kumoa">
              <Icon w={12} h={12}><path d="M1.500 4.500h6a3.200 3.200 0 0 1 0 6.500h-2M5 1l-3.500 3.500 3.500 3.500" stroke={blue} strokeWidth="1.700" /></Icon>
              <Caret />
            </QuickButton>
            <QuickButton aria-label="Tee uudelleen">
              <Icon w={12} h={12}><path d="M10.500 4.500h-6a3.200 3.200 0 0 0 0 6.500h2M7 1l3.500 3.500-3.500 3.500" stroke="#bdbdbd" strokeWidth="1.600" /></Icon>
              <Caret $color="#aaa" />
            </QuickButton>
            <QuickButton aria-label="Avaa">
              <Icon w={13} h={12}><path d="M1 10v-8h4l1 1.500h5v6.500z" fill="#e0a94f" /><path d="M1 11l2-5h9.500l-1.500 5z" fill="#f6cf86" /></Icon>
            </QuickButton>
            <QuickButton aria-label="Mukauta pikatyökaluriviä">
              <Icon w={5} h={6}><path d="M0 .5h5" stroke="#666" /><path d="M0 2.500h5l-2.500 3z" fill="#666" /></Icon>
            </QuickButton>
          </QuickAccess>
          <Title>Haku-funktio.xlsx - Excel</Title>
          <ContextHeading>KUVATYÖKALUT</ContextHeading>
          <WindowControls>
            <ControlButton aria-label="Ohje">?</ControlButton>
            <ControlButton aria-label="Valintanauhan näyttöasetukset">
              <Icon w={10} h={8}><path d="M.5 .5h9v7h-9zM.5 2.500h9M5 6.500v-3M3.500 5l1.500-1.500 1.500 1.500" stroke="#666" /></Icon>
            </ControlButton>
            <ControlButton aria-label="Pienennä"><Icon w={8} h={8}><path d="M1 5.500h6" stroke="#555" strokeWidth="1.500" /></Icon></ControlButton>
            <ControlButton aria-label="Palauta alas"><Icon w={8} h={8}><path d="M.5 2.500h5v5h-5zM.5 3.500h5M2.500 2v-1.500h5v5h-1.500" stroke="#555" /></Icon></ControlButton>
            <ControlButton aria-label="Sulje"><Icon w={8} h={8}><path d="M1 1l6 6M7 1l-6 6" stroke="#555" strokeWidth="1.400" /></Icon></ControlButton>
          </WindowControls>
        </TitleRow>
        <TabRow>
          {tabs.map(t => <Tab key={t.label} $w={t.w} $kind={t.kind}>{t.label}</Tab>)}
          <Account>
            Kari Keinonen
            <Caret $color="#c0504d" />
            <Icon w={17} h={17}>
              <path d="M0 0h17v17h-17z" fill="#1443a8" />
              <path d="M7 17l1-9-4-3 5 1 2-4 0 5 4 1-5 1-1 8zM0 12l4-2 1 7h-5zM12 12l3-1 1 6h-4z" fill="#10233c" />
              <path d="M2 7l3 2M12 4l3 2M3 14l3-1M13 9l2 1" stroke="#5f8f6a" />
            </Icon>
          </Account>
        </TabRow>
      </Top>
      <Ribbon>
        <Group $w={140}>
          <GroupBody>
            <BigButton $w={41} disabled><PivotIcon /><span>Pivot-<br />taulukko</span></BigButton>
            <BigButton $w={55}><SuggestedPivotIcon /><span>Suositellut<br />Pivot-taulukot</span></BigButton>
            <BigButton $w={44} disabled><TableIcon /><span>Taulukko</span></BigButton>
          </GroupBody>
          <GroupLabel>Taulukot</GroupLabel>
        </Group>
        <Group $w={139}>
          <GroupBody $pad={2}>
            <BigButton $w={32}><PictureIcon /><span>Kuvat</span></BigButton>
            <BigButton $w={31}><PictureIcon online /><span>Online-<br />kuvat</span></BigButton>
            <MenuAnchor>
              <ShapesButton aria-expanded="true">
                <Icon w={13} h={12}><path d="M1 1.500h6v6h-6z" fill="#fff" stroke={blue} /><circle cx="8" cy="6.500" r="3.500" fill="#e8f0fa" stroke={blue} /><path d="M9 4l3.500 3.500-3.500 3.500-3.500-3.500z" fill="#fff" stroke={blue} /></Icon>
                <span>Muodot<Caret /></span>
              </ShapesButton>
              <ShapesMenu />
            </MenuAnchor>
          </GroupBody>
          <GroupLabel>Kuvat</GroupLabel>
        </Group>
        <Group $w={64}>
          <GroupBody>
            <BigButton $w={64} aria-label="Sovellukset"><AppsIcon /></BigButton>
          </GroupBody>
        </Group>
        <Group $w={155}>
          <GroupBody>
            <BigButton $w={49} aria-label="Suositellut kaaviot"><SuggestedChartsIcon /></BigButton>
            <ChartGrid>
              {chartIcons.map(([name, icon]) => <SmallButton key={name} aria-label={name}>{icon}<Caret /></SmallButton>)}
            </ChartGrid>
            <BigButton $w={36} disabled><PivotChartIcon /><span>Pivot-<br />kaavio<Caret $color="#aaa" /></span></BigButton>
          </GroupBody>
          <GroupLabel $launcher>
            Kaaviot
            <Launcher aria-label="Kaaviot-asetukset"><Icon w={7} h={7}><path d="M.5 5v-4.500h4.500M3 3l3 3M6.500 3v3.500h-3.500" stroke="#777" /></Icon></Launcher>
          </GroupLabel>
        </Group>
        <Group $w={36}>
          <GroupBody><BigButton $w={36}><PowerViewIcon /><span>Power<br />View</span></BigButton></GroupBody>
          <GroupLabel>Raportit</GroupLabel>
        </Group>
        <Group $w={97}>
          <GroupBody $pad={2}>
            <BigButton $w={31} disabled><SparkIcon kind="line" /><span>Viiva</span></BigButton>
            <BigButton $w={30} disabled><SparkIcon kind="column" /><span>Pylväs</span></BigButton>
            <BigButton $w={32} disabled><SparkIcon kind="winloss" /><span>Voitto/<br />tappio</span></BigButton>
          </GroupBody>
          <GroupLabel>Sparkline-kaaviot</GroupLabel>
        </Group>
        <Group $w={74}>
          <GroupBody>
            <BigButton $w={36}><SlicerIcon /><span>Osittaja</span></BigButton>
            <BigButton $w={37}><TimelineIcon /><span>Aikajana</span></BigButton>
          </GroupBody>
          <GroupLabel>Suodattimet</GroupLabel>
        </Group>
        <Group $w={54}>
          <GroupBody><BigButton $w={54}><LinkIcon /><span>Hyperlinkki</span></BigButton></GroupBody>
          <GroupLabel>Linkit</GroupLabel>
        </Group>
        <Group $w={184}>
          <GroupBody>
            <BigButton $w={49}><TextBoxIcon /><span>Tekstiruutu</span></BigButton>
            <BigButton $w={46}><HeaderFooterIcon /><span>Ylä- ja<br />alatunniste</span></BigButton>
            <Column $w={87}>
              <SmallButton>
                <Icon w={11} h={12}><path d="M1.500 10.500l6-8 1.500 8M4 7.500h4" stroke={blue} strokeWidth="2" /></Icon>
                <span>WordArt<Caret /></span>
              </SmallButton>
              <SmallButton>
                <Icon w={11} h={12}><path d="M.5 .5h6l3 3v8h-9z" fill="#fff" stroke="#888" /><path d="M3 10l1-3 5-4 1.500 2-5 4z" fill={blue} /></Icon>
                <span>Allekirjoitusrivi</span><Caret />
              </SmallButton>
              <SmallButton>
                <Icon w={11} h={12}><rect x=".5" y="1.500" width="10" height="9" fill="#fff" stroke="#777" /><path d="M0 1h11v3h-11z" fill={blue} /></Icon>
                <span>Objekti</span>
              </SmallButton>
            </Column>
          </GroupBody>
          <GroupLabel>Teksti</GroupLabel>
        </Group>
        <Group $w={60}>
          <GroupBody $pad={6}>
            <Column $w={54}>
              <SmallButton>
                <Icon w={10} h={12}><path d="M1 3.500q1-1 2-1h6.500M3.500 3v4q0 2.500-2 3M6.500 3v5q0 2.500 2.500 1.500" stroke={blue} strokeWidth="1.500" /></Icon>
                <span>Kaava</span><Caret />
              </SmallButton>
              <SmallButton>
                <Icon w={10} h={12}><path d="M.5 10h3v-1.500q-2.500-1.500-2-4q.5-2.500 3.500-2.500t3.500 2.500q.5 2.500-2 4v1.500h3" stroke={blue} strokeWidth="1.500" /></Icon>
                <span>Merkki</span>
              </SmallButton>
            </Column>
          </GroupBody>
          <GroupLabel>Merkit</GroupLabel>
        </Group>
        <Collapse>
          <button aria-label="Tiivistä valintanauha"><Icon w={7} h={5}><path d="M1 4l2.500-2.500 2.500 2.500" stroke="#555" strokeWidth="1.300" /></Icon></button>
        </Collapse>
      </Ribbon>
    </Window>
  );
}
